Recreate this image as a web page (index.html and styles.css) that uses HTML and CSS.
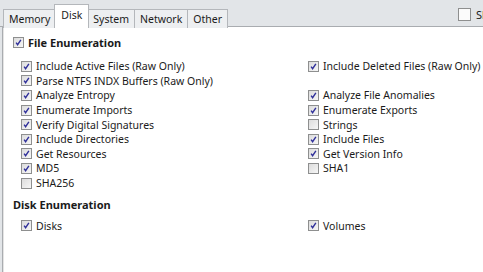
FILE: index.html
```html
<!DOCTYPE html>
<html>
<head>
<meta charset="utf-8">
<link rel="stylesheet" href="styles.css">
</head>
<body>
<div class="window">
  <div class="tabbar">
    <div class="tabs">
      <div class="tab">Memory</div>
      <div class="tab active">Disk</div>
      <div class="tab">System</div>
      <div class="tab">Network</div>
      <div class="tab">Other</div>
    </div>
    <div class="corner"><span class="cb big"></span><span class="corner-text">Show All</span></div>
  </div>
  <div class="panel">
    <div class="heading"><span class="cb on"><svg viewBox="0 0 11 11"><path d="M2.6 5.6 L4.4 8.2 L8.4 2.2"/></svg></span>File Enumeration</div>
    <div class="grid">
      <div class="item"><span class="cb on"><svg viewBox="0 0 11 11"><path d="M2.6 5.6 L4.4 8.2 L8.4 2.2"/></svg></span>Include Active Files (Raw Only)</div>
      <div class="item"><span class="cb on"><svg viewBox="0 0 11 11"><path d="M2.6 5.6 L4.4 8.2 L8.4 2.2"/></svg></span>Include Deleted Files (Raw Only)</div>
      <div class="item"><span class="cb on"><svg viewBox="0 0 11 11"><path d="M2.6 5.6 L4.4 8.2 L8.4 2.2"/></svg></span>Parse NTFS INDX Buffers (Raw Only)</div>
      <div class="item"></div>
      <div class="item"><span class="cb on"><svg viewBox="0 0 11 11"><path d="M2.6 5.6 L4.4 8.2 L8.4 2.2"/></svg></span>Analyze Entropy</div>
      <div class="item"><span class="cb on"><svg viewBox="0 0 11 11"><path d="M2.6 5.6 L4.4 8.2 L8.4 2.2"/></svg></span>Analyze File Anomalies</div>
      <div class="item"><span class="cb on"><svg viewBox="0 0 11 11"><path d="M2.6 5.6 L4.4 8.2 L8.4 2.2"/></svg></span>Enumerate Imports</div>
      <div class="item"><span class="cb on"><svg viewBox="0 0 11 11"><path d="M2.6 5.6 L4.4 8.2 L8.4 2.2"/></svg></span>Enumerate Exports</div>
      <div class="item"><span class="cb on"><svg viewBox="0 0 11 11"><path d="M2.6 5.6 L4.4 8.2 L8.4 2.2"/></svg></span>Verify Digital Signatures</div>
      <div class="item"><span class="cb"></span>Strings</div>
      <div class="item"><span class="cb on"><svg viewBox="0 0 11 11"><path d="M2.6 5.6 L4.4 8.2 L8.4 2.2"/></svg></span>Include Directories</div>
      <div class="item"><span class="cb on"><svg viewBox="0 0 11 11"><path d="M2.6 5.6 L4.4 8.2 L8.4 2.2"/></svg></span>Include Files</div>
      <div class="item"><span class="cb on"><svg viewBox="0 0 11 11"><path d="M2.6 5.6 L4.4 8.2 L8.4 2.2"/></svg></span>Get Resources</div>
      <div class="item"><span class="cb on"><svg viewBox="0 0 11 11"><path d="M2.6 5.6 L4.4 8.2 L8.4 2.2"/></svg></span>Get Version Info</div>
      <div class="item"><span class="cb on"><svg viewBox="0 0 11 11"><path d="M2.6 5.6 L4.4 8.2 L8.4 2.2"/></svg></span>MD5</div>
      <div class="item"><span class="cb"></span>SHA1</div>
      <div class="item"><span class="cb"></span>SHA256</div>
      <div class="item"></div>
    </div>
    <div class="heading heading2">Disk Enumeration</div>
    <div class="grid grid2">
      <div class="item"><span class="cb on"><svg viewBox="0 0 11 11"><path d="M2.6 5.6 L4.4 8.2 L8.4 2.2"/></svg></span>Disks</div>
      <div class="item"><span class="cb on"><svg viewBox="0 0 11 11"><path d="M2.6 5.6 L4.4 8.2 L8.4 2.2"/></svg></span>Volumes</div>
    </div>
  </div>
</div>
</body>
</html>
```

FILE: styles.css
```css
html, body {
  margin: 0;
  padding: 0;
  overflow: hidden;
  width: 483px;
  height: 272px;
}
body {
  background: #e2e5e8;
  font-family: "Noto Sans", "Open Sans", sans-serif;
  font-size: 10.5px;
  color: #1b1b1b;
}
.window {
  display: flex;
  flex-direction: column;
  height: 272px;
}
.tabbar {
  height: 27px;
  display: flex;
  justify-content: space-between;
  align-items: flex-start;
  border-bottom: 1px solid #a9acb0;
  box-sizing: border-box;
  position: relative;
}
.tabs {
  display: flex;
  align-items: flex-end;
  height: 27px;
  padding-left: 3px;
}
.tab {
  height: 19px;
  box-sizing: border-box;
  padding: 0 5px;
  display: flex;
  align-items: center;
  background: #edeff1;
  border: 1px solid #b4b7bb;
  border-bottom: none;
  margin-right: -1px;
  margin-bottom: -1px;
}
.tab.active {
  height: 24px;
  background: #ffffff;
  padding: 0 6px;
  position: relative;
  z-index: 1;
  margin-left: -1px;
  margin-right: -2px;
  padding-bottom: 3px;
}
.corner {
  display: flex;
  align-items: center;
  margin-top: 7px;
  width: 25px;
  overflow: hidden;
  white-space: nowrap;
}
.corner-text {
  margin-left: 5px;
  font-size: 11px;
}
.cb {
  width: 11px;
  height: 11px;
  box-sizing: border-box;
  border: 1px solid #8e8f8f;
  background: linear-gradient(135deg, #dcdcdc, #f6f6f6);
  flex: none;
  margin-right: 4px;
  display: inline-flex;
}
.cb.big {
  width: 13px;
  height: 13px;
  background: #fbfbfb;
  margin-right: 0;
}
.cb svg {
  width: 9px;
  height: 9px;
  fill: none;
  stroke: #30309a;
  stroke-width: 1.7;
}
.panel {
  flex: 1;
  background: #ffffff;
  margin-left: 2px;
  border-left: 1px solid #a9acb0;
  box-shadow: inset 1px 0 0 #e4e4e4;
  padding-top: 8px;
}
.heading {
  height: 15px;
  display: flex;
  align-items: center;
  padding-left: 10px;
  font-weight: bold;
  font-size: 11px;
}
.heading2 {
  margin-top: 7px;
}
.grid {
  display: grid;
  grid-template-columns: 287px auto;
  grid-auto-rows: 14.6px;
  padding-left: 18px;
  margin-top: 9px;
}
.grid2 {
  margin-top: 6px;
}
.item {
  display: flex;
  align-items: center;
  white-space: nowrap;
}
```
